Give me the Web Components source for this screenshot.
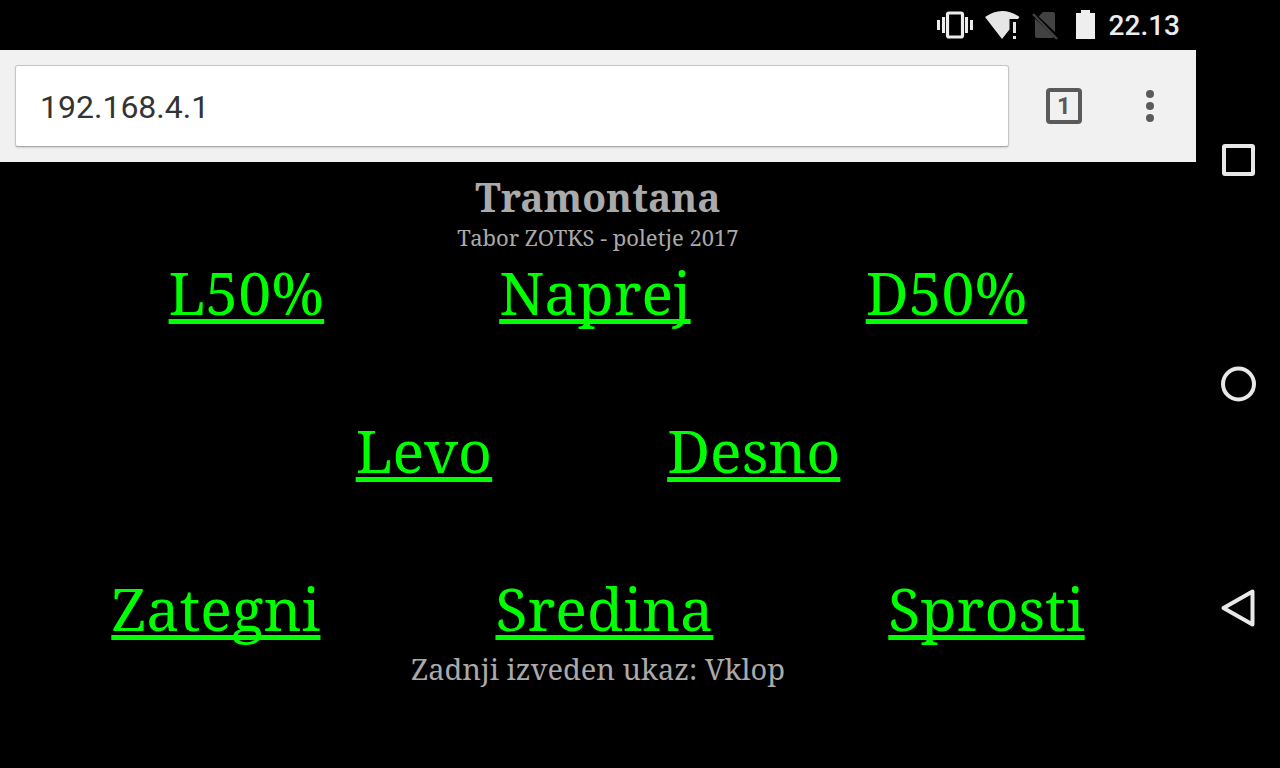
<!DOCTYPE html>
<html lang="sl">
<head>
<meta charset="utf-8">
<title>Tramontana</title>
<style>
  html, body { margin: 0; min-height: 100%; background: #000; }
  body { font-family: Roboto, sans-serif; }
</style>
</head>
<body>
<phone-screen>
  <status-bar slot="top" time="22.13"></status-bar>
  <browser-toolbar slot="top" address="192.168.4.1" tabs="1"></browser-toolbar>
  <control-page heading="Tramontana" subtitle="Tabor ZOTKS - poletje 2017">
    <command-row>
      <command-link>L50%</command-link>
      <command-link>Naprej</command-link>
      <command-link>D50%</command-link>
    </command-row>
    <command-row>
      <command-link>Levo</command-link>
      <command-link>Desno</command-link>
    </command-row>
    <command-row>
      <command-link>Zategni</command-link>
      <command-link>Sredina</command-link>
      <command-link>Sprosti</command-link>
    </command-row>
    <span slot="status">Zadnji izveden ukaz: Vklop</span>
  </control-page>
  <system-nav slot="side"></system-nav>
</phone-screen>

<script>
function define(name, html, setup) {
  const template = document.createElement('template');
  template.innerHTML = html;
  customElements.define(name, class extends HTMLElement {
    constructor() {
      super();
      this.attachShadow({ mode: 'open' }).append(template.content.cloneNode(true));
    }
    connectedCallback() { if (setup) setup(this, this.shadowRoot); }
  });
}

define('phone-screen', `
  <style>
    :host { display: grid; grid-template-columns: minmax(0, 1fr) 84px; min-height: 100vh; background: #000; }
  </style>
  <div><slot name="top"></slot><slot></slot></div>
  <slot name="side"></slot>
`);

define('status-bar', `
  <style>
    :host { display: flex; align-items: center; justify-content: flex-end; height: 50px; padding-right: 16px; box-sizing: border-box; color: #ececec; }
    svg { display: block; }
    time { font: 500 28px/50px Roboto, sans-serif; padding-top: 2px; margin-left: 12px; }
  </style>
  <svg width="162" height="50" viewBox="934 0 162 50" role="img" aria-label="Vibrate, Wi-Fi, no SIM, battery">
    <rect x="946.5" y="13" width="15" height="24" rx="1.5" fill="none" stroke="#ececec" stroke-width="3.2"/>
    <path fill="#ececec" d="M936 20h3v10h-3zM941 17h3v16h-3zM964 17h3v16h-3zM969 20h3v10h-3z"/>
    <path fill="#e6e6e6" d="M984 17Q1001 5 1018.500 17L1017 19H1008.500V29.500L1001 39zM1012 22h3v11h-3zM1012 36h3v3h-3z"/>
    <path fill="#424242" d="M1042 12H1052q2 0 2 2V32L1037.500 16.500zM1034 18.500L1053 37q-1 1-2 1H1036q-2 0-2-2z"/>
    <path stroke="#424242" stroke-width="2.400" d="M1032 14L1056 39"/>
    <path fill="#eee" d="M1080 10h9v3h5v26h-19V13h5z"/>
  </svg>
  <time></time>
`, (el, root) => { root.querySelector('time').textContent = el.getAttribute('time'); });

define('browser-toolbar', `
  <style>
    :host { display: flex; align-items: center; height: 112px; padding: 0 20px 0 15px; box-sizing: border-box; background: #f1f1f1; }
    input { flex: 1; min-width: 0; height: 82px; box-sizing: border-box; padding: 2px 24px 0; border: 1px solid #c6c6c6; border-bottom-color: #a8a8a8; border-radius: 3px; background: #fff; box-shadow: 0 1px 2px #0002; color: #333; font: 32px Roboto, sans-serif; outline: 0; }
    button { display: grid; place-items: center; padding: 0; border: 0; background: none; color: #5a5a5a; }
    .tabs { box-sizing: border-box; width: 36px; height: 36px; margin: 0 42px 0 37px; border: 4px solid #5a5a5a; border-radius: 4px; font: 700 24px/28px Roboto, sans-serif; }
    .menu { width: 52px; height: 52px; }
  </style>
  <input type="text" aria-label="Address">
  <button class="tabs" aria-label="Open tabs"></button>
  <button class="menu" aria-label="Menu">
    <svg width="8" height="32" viewBox="0 0 8 32" fill="#5a5a5a"><circle cx="4" cy="4" r="4"/><circle cx="4" cy="16" r="4"/><circle cx="4" cy="28" r="4"/></svg>
  </button>
`, (el, root) => {
  root.querySelector('input').value = el.getAttribute('address');
  root.querySelector('.tabs').textContent = el.getAttribute('tabs');
});

define('control-page', `
  <style>
    :host { display: block; padding-top: 10px; background: #000; color: #aaa; text-align: center; font-family: "Noto Serif", "Droid Serif", "DejaVu Serif", serif; }
    h1 { margin: 0; font-size: 39px; line-height: 50px; }
    p { margin: 0; }
    .subtitle { font-size: 22px; line-height: 30px; }
    .rows { display: grid; gap: 78px; }
    .status { font-size: 29px; line-height: 42px; }
  </style>
  <h1></h1>
  <p class="subtitle"></p>
  <div class="rows"><slot></slot></div>
  <p class="status"><slot name="status"></slot></p>
`, (el, root) => {
  root.querySelector('h1').textContent = el.getAttribute('heading');
  root.querySelector('.subtitle').textContent = el.getAttribute('subtitle');
});

define('command-row', `
  <style>:host { display: flex; justify-content: center; gap: 175px; }</style>
  <slot></slot>
`);

define('command-link', `
  <style>
    :host { display: block; font-size: 59px; line-height: 80px; }
    a { color: #0f0; text-decoration: underline 5px; text-underline-offset: 4px; text-decoration-skip-ink: none; }
  </style>
  <a href="#"><slot></slot></a>
`);

define('system-nav', `
  <style>
    :host { display: flex; flex-direction: column; justify-content: space-around; align-items: center; padding: 48px 0; box-sizing: border-box; background: #000; }
    button { display: grid; place-items: center; width: 84px; height: 84px; padding: 0; border: 0; background: none; }
    svg { fill: none; stroke: #e8e8e8; stroke-width: 4; stroke-linejoin: round; }
  </style>
  <button aria-label="Recent apps"><svg width="40" height="40"><rect x="6" y="6" width="29" height="28" rx="1"/></svg></button>
  <button aria-label="Home"><svg width="40" height="40"><circle cx="20.500" cy="20" r="15.500"/></svg></button>
  <button aria-label="Back"><svg width="40" height="40"><path d="M5.500 20L34.500 3.500V36.500z"/></svg></button>
`);
</script>
</body>
</html>
